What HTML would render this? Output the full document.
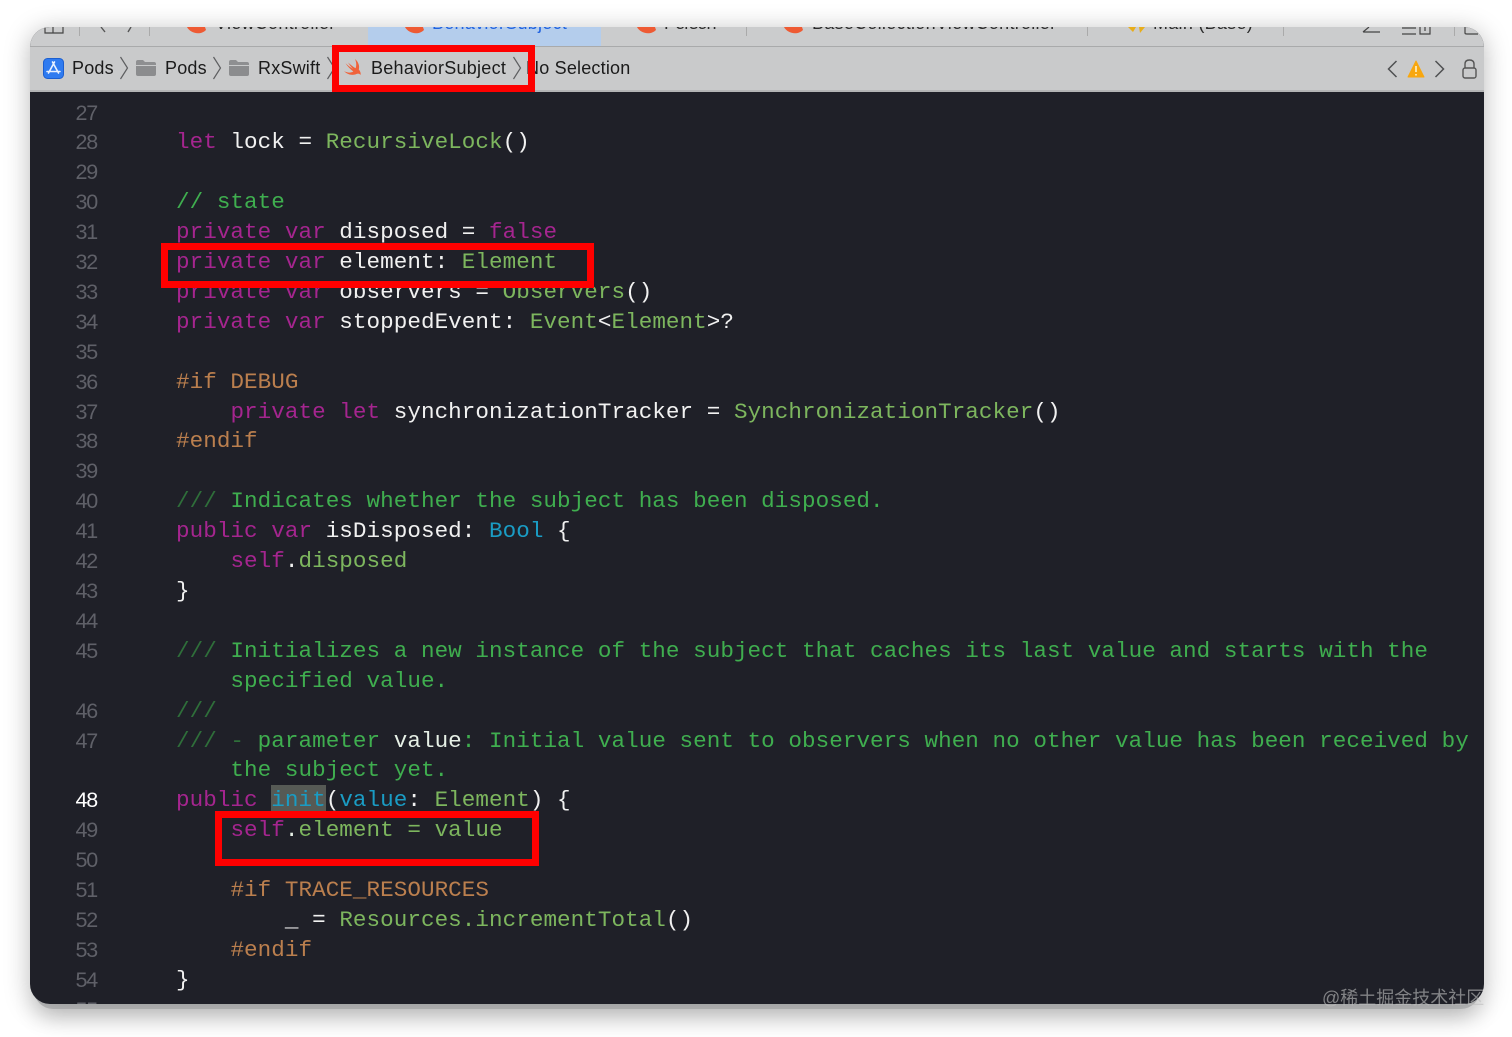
<!DOCTYPE html>
<html lang="zh">
<head>
<meta charset="utf-8">
<title>BehaviorSubject</title>
<style>
html,body{margin:0;padding:0;background:#fff;}
body{width:1512px;height:1037px;position:relative;overflow:hidden;font-family:"Liberation Sans",sans-serif;}
.under{position:absolute;left:34px;top:990px;width:1446px;height:19px;background:#c6c7c8;border-radius:0 0 20px 20px;box-shadow:0 8px 24px rgba(0,0,0,.2);}
.win{position:absolute;left:30px;top:27px;width:1454px;height:977px;border-radius:20px;overflow:hidden;background:#1f2028;box-shadow:0 4px 26px rgba(0,0,0,.28);}
.abs{position:absolute;}
.tabs{left:0;top:0;width:1454px;height:19px;background:#cbcccd;overflow:hidden;border-bottom:1px solid #a9aaab;}
.tabs .t{position:absolute;top:-15px;font-size:18px;line-height:22px;color:#2a2a2a;white-space:nowrap;letter-spacing:.27px;}
.sel{position:absolute;left:338px;top:0;width:233px;height:19px;background:#b4cdec;}
.sep{position:absolute;top:0;width:1px;height:9px;background:#aaa;}
.path{left:0;top:20px;width:1454px;height:43px;background:#c9cacb;border-bottom:2px solid #b3b4b5;}
.path span{position:absolute;top:10px;font-size:18px;line-height:22px;color:#1b1b1b;white-space:nowrap;letter-spacing:.2px;}
.code{position:absolute;left:146px;top:71.5px;margin:0;font-family:"Liberation Mono",monospace;font-size:22.6px;line-height:29.9px;letter-spacing:.05px;color:#f1f1f1;white-space:pre;}
.nums{position:absolute;left:25px;top:71.5px;width:42px;text-align:right;font-size:21.5px;line-height:29.9px;letter-spacing:-1.2px;color:#5f6068;white-space:pre;margin:0;font-family:"Liberation Sans",sans-serif;}
.nums b{color:#fff;font-weight:400;}
.k{color:#a5258f;}.c{color:#3fae4f;}.d{color:#2f6f3a;}.g{color:#7db65e;}.b{color:#1a9cc4;}.p{color:#bb7f4e;}.w{color:#e6f0e6;}
.hl{position:absolute;left:241px;top:758px;width:55px;height:27px;background:#565a55;}
.box{position:absolute;border:7.5px solid #fe0000;box-sizing:border-box;}
.wm{position:absolute;left:1322px;top:985px;font-family:"Liberation Sans","Noto Sans CJK SC",sans-serif;font-size:18px;line-height:26px;color:rgba(190,190,190,.62);white-space:nowrap;}
svg{position:absolute;overflow:visible;}
</style>
</head>
<body>
<div class="under"></div>
<div class="win">
  <div class="abs tabs">
    <div class="sel"></div>
    <svg style="left:14px;top:0" width="20" height="9"><path d="M1 0V6H9M9 0V6H19V0" fill="none" stroke="#444" stroke-width="1.2"/></svg>
    <div class="sep" style="left:49px"></div>
    <svg style="left:68px;top:0" width="40" height="8"><path d="M3 0L7 5M30 5L33 0" fill="none" stroke="#555" stroke-width="1.4"/></svg>
    <div class="sep" style="left:119px"></div>
    <svg style="left:157px;top:0" width="20" height="9"><path d="M0 0C3 6 13 9 19 3L18 0Z" fill="#ee5a33"/></svg>
    <span class="t" style="left:185px">ViewController</span>
    <svg style="left:375px;top:0" width="20" height="9"><path d="M0 0C3 6 13 9 19 3L18 0Z" fill="#ee5a33"/></svg>
    <span class="t" style="left:402px;color:#1f62e0">BehaviorSubject</span>
    <svg style="left:607px;top:0" width="20" height="9"><path d="M0 0C3 6 13 9 19 3L18 0Z" fill="#ee5a33"/></svg>
    <span class="t" style="left:634px;letter-spacing:-.9px">Person</span>
    <div class="sep" style="left:716px"></div>
    <svg style="left:754px;top:0" width="20" height="9"><path d="M0 0C3 6 13 9 19 3L18 0Z" fill="#ee5a33"/></svg>
    <span class="t" style="left:782px">BaseCollectionViewController</span>
    <div class="sep" style="left:1057px"></div>
    <svg style="left:1097px;top:0" width="20" height="9"><path d="M1 0L6 5L9 0M12 0L13 6L18 0" fill="#e8ad1a"/></svg>
    <span class="t" style="left:1123px">Main (Base)</span>
    <div class="sep" style="left:1253px"></div>
    <svg style="left:1332px;top:0" width="90" height="10"><path d="M1 5H18M1 5L7 0M40 1H54M40 7H54M58 0V7H68V0M63 0V4" fill="none" stroke="#444" stroke-width="1.2"/><path d="M103 0V6Q103 7 105 7H116" fill="none" stroke="#444" stroke-width="1.2"/></svg>
    <div class="sep" style="left:1424px"></div>
  </div>
  <div class="abs path">
    <svg style="left:13px;top:11px" width="21" height="21" viewBox="0 0 21 21"><rect x=".5" y=".5" width="20" height="20" rx="4" fill="#2f7bf0" stroke="#1c5fd0"/><path d="M11.5 4L5.5 15M9.5 4L15.5 15M4 13.5H17" fill="none" stroke="#e8f1ff" stroke-width="1.6" stroke-linecap="round"/></svg>
    <span style="left:42px">Pods</span>
    <svg style="left:89px;top:9px" width="10" height="24"><path d="M1.5 1L8.5 12L1.5 23" fill="none" stroke="#5d5e60" stroke-width="1.2"/></svg>
    <svg style="left:106px;top:13px" width="20" height="16"><path d="M0 2Q0 0 2 0H7L9 2H18Q20 2 20 4V5H0Z" fill="#8e8f91"/><path d="M0 6H20V14Q20 16 18 16H2Q0 16 0 14Z" fill="#8b8c8e"/></svg>
    <span style="left:135px">Pods</span>
    <svg style="left:182px;top:9px" width="10" height="24"><path d="M1.5 1L8.5 12L1.5 23" fill="none" stroke="#5d5e60" stroke-width="1.2"/></svg>
    <svg style="left:199px;top:13px" width="20" height="16"><path d="M0 2Q0 0 2 0H7L9 2H18Q20 2 20 4V5H0Z" fill="#8e8f91"/><path d="M0 6H20V14Q20 16 18 16H2Q0 16 0 14Z" fill="#8b8c8e"/></svg>
    <span style="left:228px">RxSwift</span>
    <svg style="left:296px;top:9px" width="10" height="24"><path d="M1.5 1L8.5 12L1.5 23" fill="none" stroke="#5d5e60" stroke-width="1.2"/></svg>
    <svg style="left:313px;top:11px" width="21" height="20" viewBox="0 0 21 20"><path d="M12 1C15.5 4 16.8 8 15.8 11.5C17.5 13.5 18 15.5 17.5 17C16.5 15.5 15 15.2 13.5 16C10 17.7 4.5 17 1 13C4.2 15 8 15 10.3 13.5C7.2 11.3 4.5 8.3 2.5 5.3C5 7.6 7.7 9.6 10 11C8.2 9 6.4 6.7 5 4.5C7.8 7 10.5 9.2 12.6 10.2C13.7 7.4 13.3 4 12 1Z" fill="#f0623a"/></svg>
    <span style="left:341px;letter-spacing:.27px">BehaviorSubject</span>
    <svg style="left:482px;top:9px" width="10" height="24"><path d="M1.5 1L8.5 12L1.5 23" fill="none" stroke="#5d5e60" stroke-width="1.2"/></svg>
    <span style="left:496px">No Selection</span>
    <svg style="left:1357px;top:13px" width="11" height="18"><path d="M9.5 1L1.5 9L9.5 17" fill="none" stroke="#4f5052" stroke-width="1.5"/></svg>
    <svg style="left:1377px;top:13px" width="18" height="18" viewBox="0 0 18 18"><path d="M9 1L17 17H1Z" fill="#f8a70f" stroke="#f8a70f" stroke-width="1" stroke-linejoin="round"/><path d="M9 6V12M9 14V15.5" stroke="#fff3c8" stroke-width="1.6"/></svg>
    <svg style="left:1404px;top:13px" width="11" height="18"><path d="M1.5 1L9.5 9L1.5 17" fill="none" stroke="#4f5052" stroke-width="1.5"/></svg>
    <svg style="left:1432px;top:12px" width="15" height="20"><path d="M3 9V5Q3 1 7.5 1Q12 1 12 5V9" fill="none" stroke="#555" stroke-width="1.4"/><rect x="1" y="9" width="13" height="10" rx="2" fill="none" stroke="#555" stroke-width="1.4"/></svg>
  </div>
  <div class="hl"></div>
<pre class="nums">27
28
29
30
31
32
33
34
35
36
37
38
39
40
41
42
43
44
45

46
47

<b>48</b>
49
50
51
52
53
54
55</pre>
<pre class="code">

<span class="k">let</span> lock = <span class="g">RecursiveLock</span>()

<span class="c">// state</span>
<span class="k">private var</span> disposed = <span class="k">false</span>
<span class="k">private var</span> element: <span class="g">Element</span>
<span class="k">private var</span> observers = <span class="g">Observers</span>()
<span class="k">private var</span> stoppedEvent: <span class="g">Event</span>&lt;<span class="g">Element</span>&gt;?

<span class="p">#if DEBUG</span>
    <span class="k">private let</span> synchronizationTracker = <span class="g">SynchronizationTracker</span>()
<span class="p">#endif</span>

<span class="d">///</span><span class="c"> Indicates whether the subject has been disposed.</span>
<span class="k">public var</span> isDisposed: <span class="b">Bool</span> {
    <span class="k">self</span>.<span class="g">disposed</span>
}

<span class="d">///</span><span class="c"> Initializes a new instance of the subject that caches its last value and starts with the</span>
<span class="c">    specified value.</span>
<span class="d">///</span>
<span class="d">/// -</span><span class="c"> parameter </span><span class="w">value</span><span class="c">: Initial value sent to observers when no other value has been received by</span>
<span class="c">    the subject yet.</span>
<span class="k">public</span> <span class="b">init</span>(<span class="b">value</span>: <span class="g">Element</span>) {
    <span class="k">self</span><span class="w">.</span><span class="g">element = value</span>

    <span class="p">#if TRACE_RESOURCES</span>
        _ = <span class="g">Resources.incrementTotal</span>()
    <span class="p">#endif</span>
}</pre>
</div>
<div class="box" style="left:332px;top:45px;width:203px;height:47px"></div>
<div class="box" style="left:161px;top:243px;width:433px;height:45px"></div>
<div class="box" style="left:215px;top:811px;width:324px;height:55px"></div>
<div class="wm">@稀土掘金技术社区</div>
</body>
</html>
